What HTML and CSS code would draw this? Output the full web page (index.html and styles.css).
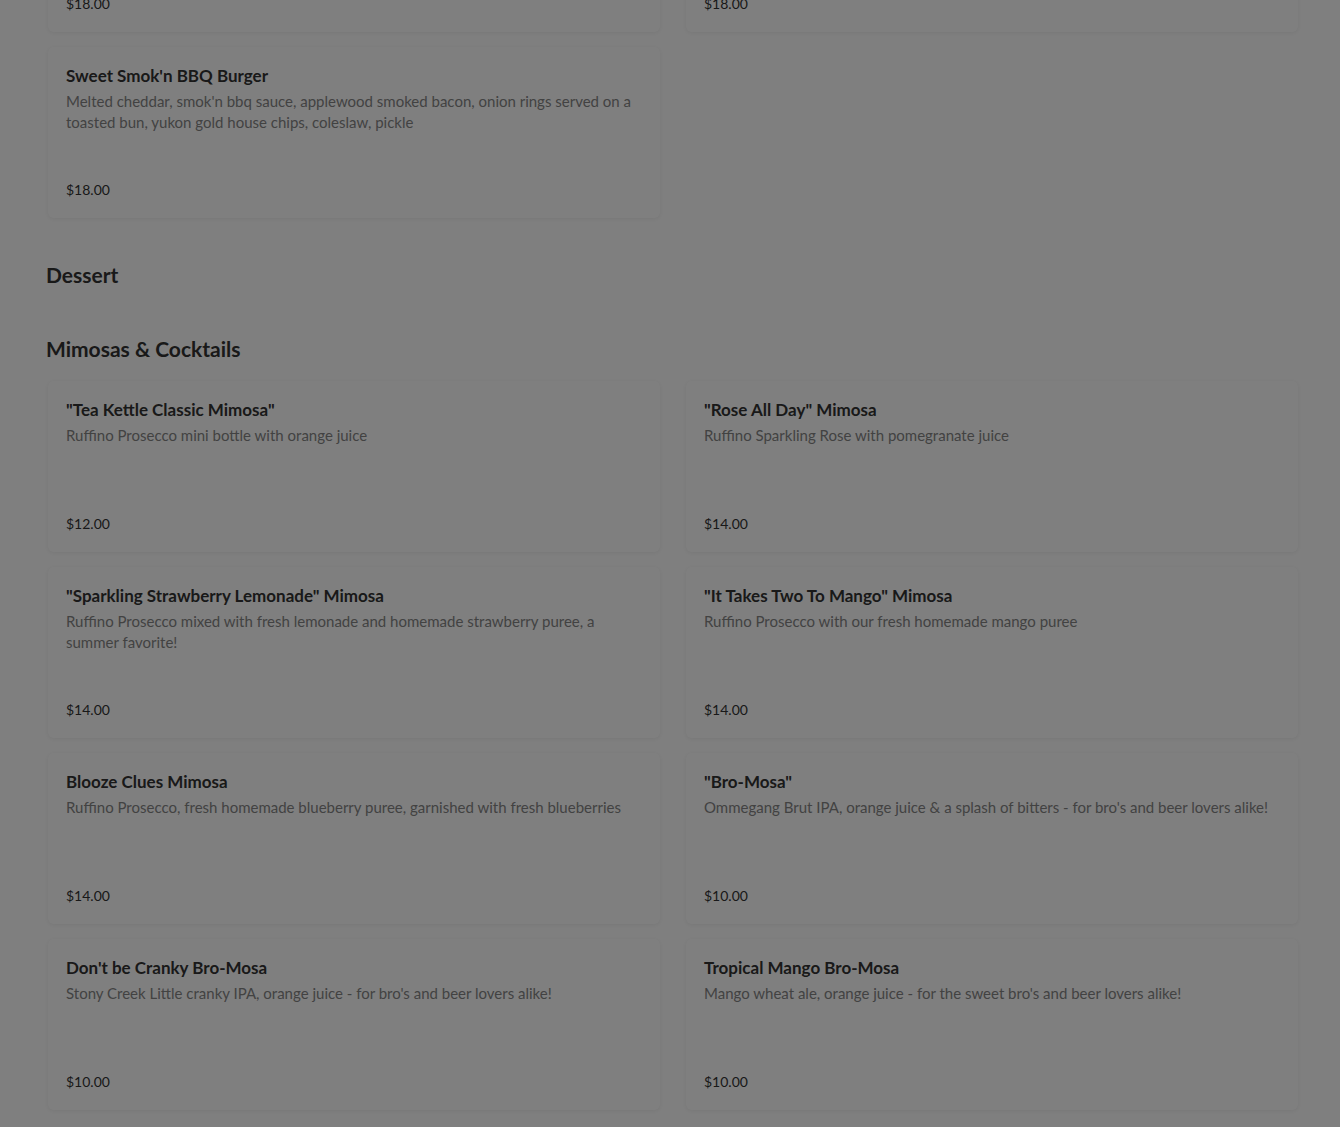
FILE: index.html
```html
<!DOCTYPE html>
<html lang="en">
<head>
<meta charset="utf-8">
<title>Menu</title>
<link rel="stylesheet" href="styles.css">
</head>
<body>
<main class="menu">
  <section class="section section-first">
    <div class="grid">
      <article class="card"><h3 class="card-title">Classic Burger</h3><p class="card-desc">Lettuce, tomato, onion, pickle on a toasted bun, yukon gold house chips, coleslaw</p><p class="card-price">$18.00</p></article>
      <article class="card"><h3 class="card-title">Mushroom Swiss Burger</h3><p class="card-desc">Sauteed mushrooms, melted swiss on a toasted bun, yukon gold house chips, coleslaw, pickle</p><p class="card-price">$18.00</p></article>
      <article class="card"><h3 class="card-title">Sweet Smok'n BBQ Burger</h3><p class="card-desc">Melted cheddar, smok'n bbq sauce, applewood smoked bacon, onion rings served on a toasted bun, yukon gold house chips, coleslaw, pickle</p><p class="card-price">$18.00</p></article>
    </div>
  </section>

  <section class="section">
    <h2 class="section-title">Dessert</h2>
    <div class="grid grid-empty"></div>
  </section>

  <section class="section">
    <h2 class="section-title">Mimosas &amp; Cocktails</h2>
    <div class="grid">
      <article class="card"><h3 class="card-title">"Tea Kettle Classic Mimosa"</h3><p class="card-desc">Ruffino Prosecco mini bottle with orange juice</p><p class="card-price">$12.00</p></article>
      <article class="card"><h3 class="card-title">"Rose All Day" Mimosa</h3><p class="card-desc">Ruffino Sparkling Rose with pomegranate juice</p><p class="card-price">$14.00</p></article>
      <article class="card"><h3 class="card-title">"Sparkling Strawberry Lemonade" Mimosa</h3><p class="card-desc">Ruffino Prosecco mixed with fresh lemonade and homemade strawberry puree, a summer favorite!</p><p class="card-price">$14.00</p></article>
      <article class="card"><h3 class="card-title">"It Takes Two To Mango" Mimosa</h3><p class="card-desc">Ruffino Prosecco with our fresh homemade mango puree</p><p class="card-price">$14.00</p></article>
      <article class="card"><h3 class="card-title">Blooze Clues Mimosa</h3><p class="card-desc">Ruffino Prosecco, fresh homemade blueberry puree, garnished with fresh blueberries</p><p class="card-price">$14.00</p></article>
      <article class="card"><h3 class="card-title">"Bro-Mosa"</h3><p class="card-desc">Ommegang Brut IPA, orange juice &amp; a splash of bitters - for bro's and beer lovers alike!</p><p class="card-price">$10.00</p></article>
      <article class="card"><h3 class="card-title">Don't be Cranky Bro-Mosa</h3><p class="card-desc">Stony Creek Little cranky IPA, orange juice - for bro's and beer lovers alike!</p><p class="card-price">$10.00</p></article>
      <article class="card"><h3 class="card-title">Tropical Mango Bro-Mosa</h3><p class="card-desc">Mango wheat ale, orange juice - for the sweet bro's and beer lovers alike!</p><p class="card-price">$10.00</p></article>
    </div>
  </section>
</main>
<div class="overlay"></div>
</body>
</html>
```
FILE: styles.css
```css
* { box-sizing: border-box; }
html, body { margin: 0; padding: 0; }
body {
  background: #ffffff;
  font-family: Lato, "Open Sans", "Liberation Sans", sans-serif;
  color: #333333;
  overflow: hidden;
  height: 1127px;
}
.menu {
  width: 1250px;
  margin: 0 0 0 48px;
}
.section { padding-top: 28px; }
.section-first { margin-top: -167px; }
.section-title {
  margin: 0 0 18px -2px;
  font-size: 21px;
  line-height: 28px;
  font-weight: 700;
  color: #333333;
}
.grid {
  display: grid;
  grid-template-columns: 612px 612px;
  column-gap: 26px;
  row-gap: 15px;
  padding-bottom: 15px;
}
.grid-empty { padding-bottom: 0; }
.card {
  height: 171px;
  background: #ffffff;
  border-radius: 6px;
  box-shadow: 0 1px 5px rgba(0, 0, 0, 0.07);
  padding: 19px 18px 18px;
  display: flex;
  flex-direction: column;
}
.card-title {
  margin: 0 0 5px;
  font-size: 17px;
  line-height: 20px;
  font-weight: 700;
  color: #333333;
}
.card-desc {
  margin: 0;
  font-size: 15px;
  line-height: 21px;
  color: #858585;
}
.card-price {
  margin: auto 0 0;
  font-size: 14px;
  line-height: 21px;
  color: #333333;
}
.overlay {
  position: fixed;
  inset: 0;
  background: rgba(0, 0, 0, 0.5);
}
```
